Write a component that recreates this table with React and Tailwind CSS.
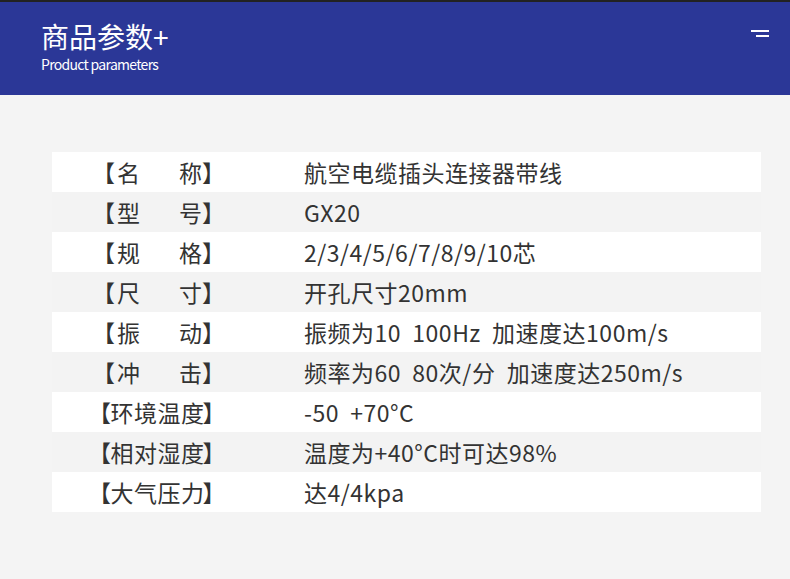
import React from "react";

const rows = [
  [["名", "称"], "航空电缆插头连接器带线"],
  [["型", "号"], "GX20"],
  [["规", "格"], "2/3/4/5/6/7/8/9/10芯"],
  [["尺", "寸"], "开孔尺寸20mm"],
  [["振", "动"], "振频为10  100Hz  加速度达100m/s"],
  [["冲", "击"], "频率为60  80次/分  加速度达250m/s"],
  ["环境温度", "-50  +70°C"],
  ["相对湿度", "温度为+40°C时可达98%"],
  ["大气压力", "达4/4kpa"],
];

const Label = ({ label }) => {
  if (Array.isArray(label)) {
    return (
      <div className="flex">
        <span>【</span>
        <span className="ml-[2px]">{label[0]}</span>
        <span className="ml-[39px]">{label[1]}</span>
        <span>】</span>
      </div>
    );
  }
  return (
    <div className="flex tracking-[0.5px] ml-[-4px]">
      <span className="mr-[-1px]">【</span>
      <span>{label}</span>
      <span className="ml-[-2px]">】</span>
    </div>
  );
};

const App = () => {
  return (
    <div
      className="w-[790px] h-[579px] bg-[#f4f4f4] overflow-hidden"
      style={{ fontFamily: '"Noto Sans CJK SC", "Noto Sans", sans-serif' }}
    >
      <div className="h-[2px] bg-[#222222]" />
      <div className="h-[93px] bg-[#2b3797] flex justify-between px-[40px]">
        <div className="pt-[17px] text-white">
          <div className="text-[28px] leading-[34px] pl-[1px]">商品参数+</div>
          <div className="text-[14px] leading-[18px] tracking-[-0.7px] mt-[2px] pl-[1px]">
            Product parameters
          </div>
        </div>
        <div className="pt-[28px] flex flex-col items-end gap-[3px] mr-[-19px]">
          <div className="w-[18px] h-[2px] bg-white" />
          <div className="w-[13px] h-[2px] bg-white" />
        </div>
      </div>

      <div className="mt-[57px] ml-[52px] w-[709px]">
        {rows.map(([label, value], index) => (
          <div
            key={value}
            className={`h-[40px] flex items-center text-[23px] text-[#333333] ${
              index % 2 === 0 ? "bg-white" : "bg-[#f3f3f3]"
            }`}
          >
            <div className="w-[252px] pl-[40px]">
              <Label label={label} />
            </div>
            <div className="whitespace-pre tracking-[0.5px]">{value}</div>
          </div>
        ))}
      </div>
    </div>
  );
};

export default App;
